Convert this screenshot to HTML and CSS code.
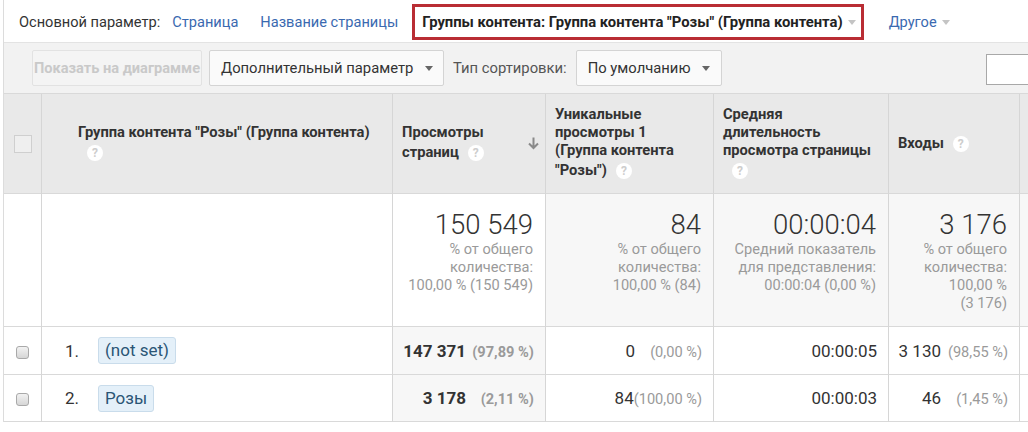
FILE: index.html
```html
<!DOCTYPE html>
<html lang="ru">
<head>
<meta charset="utf-8">
<title>Отчёт</title>
<link rel="stylesheet" href="styles.css">
</head>
<body>
<div class="page">
  <div class="nav">
    <span class="nav-label">Основной параметр:</span>
    <a class="nav-link first">Страница</a>
    <a class="nav-link">Название страницы</a>
    <span class="nav-active">Группы контента: Группа контента "Розы" (Группа контента)<span class="caret light"></span></span>
    <a class="nav-link other">Другое<span class="caret light"></span></a>
  </div>
  <div class="toolbar">
    <button class="btn disabled">Показать на диаграмме</button>
    <button class="btn select wide">Дополнительный параметр<span class="caret"></span></button>
    <span class="tb-label">Тип сортировки:</span>
    <button class="btn select">По умолчанию<span class="caret"></span></button>
    <span class="tb-spacer"></span>
    <span class="search"></span>
  </div>
  <table class="grid">
    <colgroup>
      <col class="c-check"><col class="c-dim"><col class="c-pv"><col class="c-upv"><col class="c-avg"><col class="c-ent"><col class="c-rest">
    </colgroup>
    <thead>
      <tr>
        <th class="check-cell"><span class="hcheck"></span></th>
        <th class="dim-head">Группа контента "Розы" (Группа контента)<br><span class="help">?</span></th>
        <th class="metric-head sorted-head">
          <div class="head-flex"><div>Просмотры<br>страниц<span class="help">?</span></div>
          <svg class="sort" width="11" height="13" viewBox="0 0 11 13"><path d="M5.5 0.5v10M1 6.5l4.5 4.5 4.5-4.5" fill="none" stroke="#8a8a8a" stroke-width="2"/></svg></div>
        </th>
        <th class="metric-head">Уникальные<br>просмотры 1<br>(Группа контента<br>"Розы")<span class="help">?</span></th>
        <th class="metric-head">Средняя<br>длительность<br>просмотра страницы<br><span class="help">?</span></th>
        <th class="metric-head">Входы<span class="help">?</span></th>
        <th class="metric-head"></th>
      </tr>
    </thead>
    <tbody>
      <tr class="summary">
        <td class="check-cell white"></td>
        <td class="white"></td>
        <td class="sum white"><div class="big">150 549</div><div class="sub">% от общего<br>количества:<br>100,00 % (150 549)</div></td>
        <td class="sum"><div class="big">84</div><div class="sub">% от общего<br>количества:<br>100,00 % (84)</div></td>
        <td class="sum"><div class="big">00:00:04</div><div class="sub">Средний показатель<br>для представления:<br>00:00:04 (0,00 %)</div></td>
        <td class="sum"><div class="big">3 176</div><div class="sub">% от общего<br>количества:<br>100,00 %<br>(3 176)</div></td>
        <td class="sum"></td>
      </tr>
      <tr class="row">
        <td class="check-cell"><span class="rcheck"></span></td>
        <td><div class="dim"><span class="idx">1.</span><span class="pill">(not set)</span></div></td>
        <td class="num sorted"><b>147 371</b><span class="pct strong">(97,89 %)</span></td>
        <td class="num">0<span class="pct">(0,00 %)</span></td>
        <td class="num">00:00:05</td>
        <td class="num">3 130<span class="pct">(98,55 %)</span></td>
        <td></td>
      </tr>
      <tr class="row">
        <td class="check-cell"><span class="rcheck"></span></td>
        <td><div class="dim"><span class="idx">2.</span><span class="pill">Розы</span></div></td>
        <td class="num sorted"><b>3 178</b><span class="pct strong">(2,11 %)</span></td>
        <td class="num">84<span class="pct">(100,00 %)</span></td>
        <td class="num">00:00:03</td>
        <td class="num">46<span class="pct">(1,45 %)</span></td>
        <td></td>
      </tr>
    </tbody>
  </table>
</div>
</body>
</html>
```
FILE: styles.css
```css
* { box-sizing: border-box; }
html, body { margin: 0; padding: 0; background: #fff; }
body { font-family: Roboto, "Noto Sans", Arial, sans-serif; color: #333; overflow: hidden; }

.page {
  margin-left: 3px;
  border-left: 1px solid #dcdcdc;
  width: 1025px;
  overflow: hidden;
}

/* top nav */
.nav {
  height: 43px;
  display: flex;
  align-items: center;
  padding-left: 15px;
  padding-top: 2px;
  font-size: 14.6px;
  border-bottom: 1px solid #e3e3e3;
  white-space: nowrap;
}
.nav-label { color: #333; margin-right: 12px; }
.nav-link { color: #3a69b0; margin-right: 22px; cursor: pointer; }
.nav-active {
  font-weight: bold;
  font-size: 14.8px;
  color: #222;
  border: 3px solid #b92d34;
  height: 36px;
  display: flex;
  align-items: center;
  padding: 0 5px 0 7px;
  margin-left: -8px;
  margin-right: 25px;
}
.other { display: flex; align-items: center; }

.caret {
  display: inline-block;
  width: 0; height: 0;
  border-left: 4px solid transparent;
  border-right: 4px solid transparent;
  border-top: 5px solid #666;
  margin-left: 12px;
}
.caret.light { border-top-color: #c4c4c4; margin-left: 5px; }

/* toolbar */
.toolbar {
  height: 51px;
  background: #f2f2f2;
  display: flex;
  align-items: center;
  padding-left: 28px;
  border-bottom: 1px solid #d9d9d9;
  white-space: nowrap;
}
.btn {
  font-family: inherit;
  height: 36px;
  border-radius: 2px;
  font-size: 14.8px;
  display: flex;
  align-items: center;
  margin-right: 7px;
}
.btn.disabled {
  width: 170px;
  padding: 0 0 0 1px;
  background: #f4f4f4;
  border: 1px solid #e2e2e2;
  color: #c9c9c9;
  font-size: 14.6px;
  font-weight: bold;
  overflow: hidden;
}
.btn.select {
  background: #fafafa;
  border: 1px solid #d4d4d4;
  color: #333;
  padding: 0 11px 0 11px;
}
.btn.select .caret { margin-left: 12px; }
.btn.wide { width: 235px; }
.tb-label { font-size: 14.8px; color: #555; margin: 0 9px 0 2px; }
.tb-spacer { flex: 1; }
.search {
  width: 42px;
  height: 31px;
  border: 1px solid #a8a8a8;
  border-right: none;
  background: #fff;
  margin-top: 2px;
}

/* table */
.grid {
  border-collapse: separate;
  border-spacing: 0;
  table-layout: fixed;
  width: 1060px;
}
.c-check { width: 38px; }
.c-dim { width: 351px; }
.c-pv { width: 153px; }
.c-upv { width: 168px; }
.c-avg { width: 175px; }
.c-ent { width: 131px; }
.c-rest { width: 44px; }

th, td { border-right: 1px solid #d6d6d6; border-bottom: 1px solid #d9d9d9; padding: 0; }

thead th {
  height: 100px;
  background: #e9e9e9;
  font-size: 14.7px;
  font-weight: bold;
  color: #333;
  text-align: left;
  vertical-align: middle;
  line-height: 18px;
  white-space: nowrap;
}
.check-cell { text-align: center; }
.hcheck {
  display: inline-block;
  width: 18px; height: 18px;
  border: 1px solid #cfcfcf;
  background: #efefef;
  vertical-align: middle;
}
.dim-head { padding-left: 36px; }
.metric-head { padding-left: 9px; padding-right: 6px; }
.head-flex { display: flex; align-items: center; justify-content: space-between; }

.help {
  display: inline-block;
  width: 16px; height: 16px;
  line-height: 16px;
  border-radius: 50%;
  background: #fff;
  color: #cdcdcd;
  font-size: 12px;
  font-weight: bold;
  text-align: center;
  vertical-align: middle;
  margin: 4px 0 4px 9px;
}

/* summary */
.summary td { background: #f7f7f7; vertical-align: top; }
.summary td.white { background: #fff; }
.sum { text-align: right; padding: 16px 12px 14px 0; }
.big { font-size: 27.5px; font-weight: 300; line-height: 30px; color: #333; }
.sub { font-size: 14.6px; color: #9a9a9a; line-height: 18px; font-weight: 400; }

/* rows */
.row td { height: 48px; background: #fff; vertical-align: middle; font-size: 17px; }
.row td.sorted { background: #f7f7f7; }
.row + .row td { height: 47px; }
.rcheck {
  display: inline-block;
  width: 13px; height: 13px;
  border: 1px solid #a9a9a9;
  border-radius: 3px;
  background: linear-gradient(#f2f2f2, #d6d6d6);
  vertical-align: middle;
}
.dim { display: flex; align-items: center; padding-left: 23px; }
.idx { width: 33px; color: #333; }
.pill {
  display: inline-block;
  background: #e4f0f9;
  border: 1px solid #c9dceb;
  border-radius: 3px;
  color: #2a5575;
  padding: 3px 6px;
  line-height: 19px;
}
.num { text-align: right; padding-right: 11px; color: #333; white-space: nowrap; }
.num b { font-weight: bold; }
.pct {
  display: inline-block;
  min-width: 67px;
  text-align: right;
  font-size: 14.6px;
  color: #9a9a9a;
  font-weight: 400;
}
.pct.strong { font-weight: bold; color: #9a9a9a; min-width: 68px; }
```
